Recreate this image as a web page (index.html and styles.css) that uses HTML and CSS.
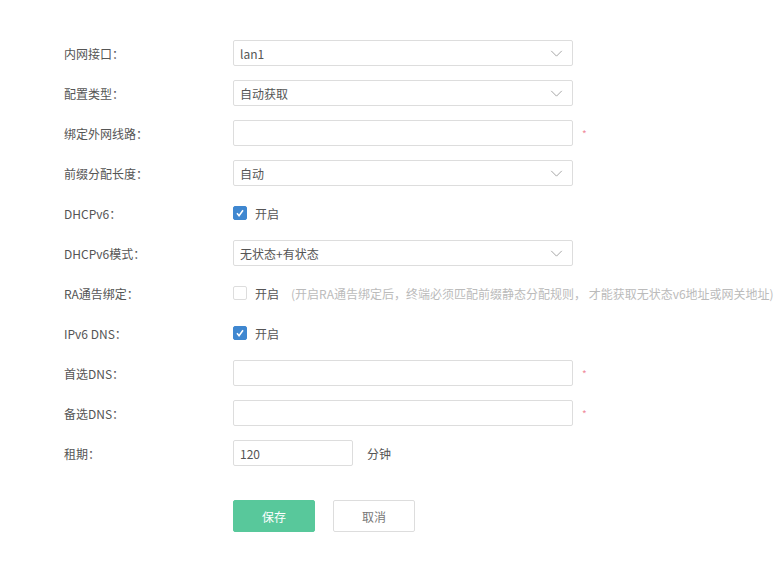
FILE: index.html
```html
<!DOCTYPE html>
<html lang="zh">
<head>
<meta charset="utf-8">
<link rel="stylesheet" href="styles.css">
</head>
<body>
<form class="form">
  <div class="row"><label class="label">内网接口：</label><div class="select"><span>lan1</span><svg class="arrow" viewBox="0 0 14 8"><path d="M1 1l6 6 6-6"/></svg></div></div>
  <div class="row"><label class="label">配置类型：</label><div class="select"><span>自动获取</span><svg class="arrow" viewBox="0 0 14 8"><path d="M1 1l6 6 6-6"/></svg></div></div>
  <div class="row"><label class="label">绑定外网线路：</label><div class="input"></div><span class="req">*</span></div>
  <div class="row"><label class="label">前缀分配长度：</label><div class="select"><span>自动</span><svg class="arrow" viewBox="0 0 14 8"><path d="M1 1l6 6 6-6"/></svg></div></div>
  <div class="row"><label class="label">DHCPv6：</label><span class="check on"><svg viewBox="0 0 14 14"><path d="M3.5 7.2l2.4 3 4.6-6.4"/></svg></span><span class="ctext">开启</span></div>
  <div class="row"><label class="label">DHCPv6模式：</label><div class="select"><span>无状态+有状态</span><svg class="arrow" viewBox="0 0 14 8"><path d="M1 1l6 6 6-6"/></svg></div></div>
  <div class="row"><label class="label">RA通告绑定：</label><span class="check"></span><span class="ctext">开启</span><span class="hint">(开启RA通告绑定后，终端必须匹配前缀静态分配规则， 才能获取无状态v6地址或网关地址)</span></div>
  <div class="row"><label class="label">IPv6 DNS：</label><span class="check on"><svg viewBox="0 0 14 14"><path d="M3.5 7.2l2.4 3 4.6-6.4"/></svg></span><span class="ctext">开启</span></div>
  <div class="row"><label class="label">首选DNS：</label><div class="input"></div><span class="req">*</span></div>
  <div class="row"><label class="label">备选DNS：</label><div class="input"></div><span class="req">*</span></div>
  <div class="row"><label class="label">租期：</label><div class="input small"><span>120</span></div><span class="unit">分钟</span></div>
  <div class="actions"><button type="button" class="btn primary">保存</button><button type="button" class="btn">取消</button></div>
</form>
</body>
</html>
```
FILE: styles.css
```css
html, body { margin: 0; padding: 0; background: #fff; }
body { font-family: "Noto Sans CJK SC", "Noto Sans", sans-serif; font-size: 12px; color: #555; }
.form { padding: 40px 0 0 64px; display: flex; flex-direction: column; gap: 14px; }
.row { display: flex; align-items: center; height: 26px; white-space: nowrap; }
.label { width: 169px; flex: none; color: #555; }
.select, .input { box-sizing: border-box; width: 340px; height: 26px; border: 1px solid #ddd; border-radius: 2px; display: flex; align-items: center; justify-content: space-between; padding: 0 9px 0 6px; color: #555; }
.input.small { width: 120px; }
.arrow { width: 13px; height: 7px; fill: none; stroke: #999; stroke-width: 1; }
.req { color: #f08c9b; margin-left: 9px; font-size: 10px; }
.check { box-sizing: border-box; width: 14px; height: 14px; border: 1px solid #ddd; border-radius: 2px; display: inline-flex; flex: none; }
.check.on { background: #3f87d0; border-color: #3f87d0; }
.check svg { width: 12px; height: 12px; fill: none; stroke: #fff; stroke-width: 1.8; }
.ctext { margin-left: 8px; color: #555; }
.hint { margin-left: 12px; color: #bbb; }
.unit { margin-left: 14px; }
.actions { display: flex; gap: 18px; margin: 20px 0 0 169px; }
.btn { box-sizing: border-box; width: 82px; height: 32px; border: 1px solid #ddd; border-radius: 2px; background: #fff; color: #777; font-family: inherit; font-size: 12px; padding: 0; }
.btn.primary { background: #58c89b; border-color: #58c89b; color: #fff; }
```
